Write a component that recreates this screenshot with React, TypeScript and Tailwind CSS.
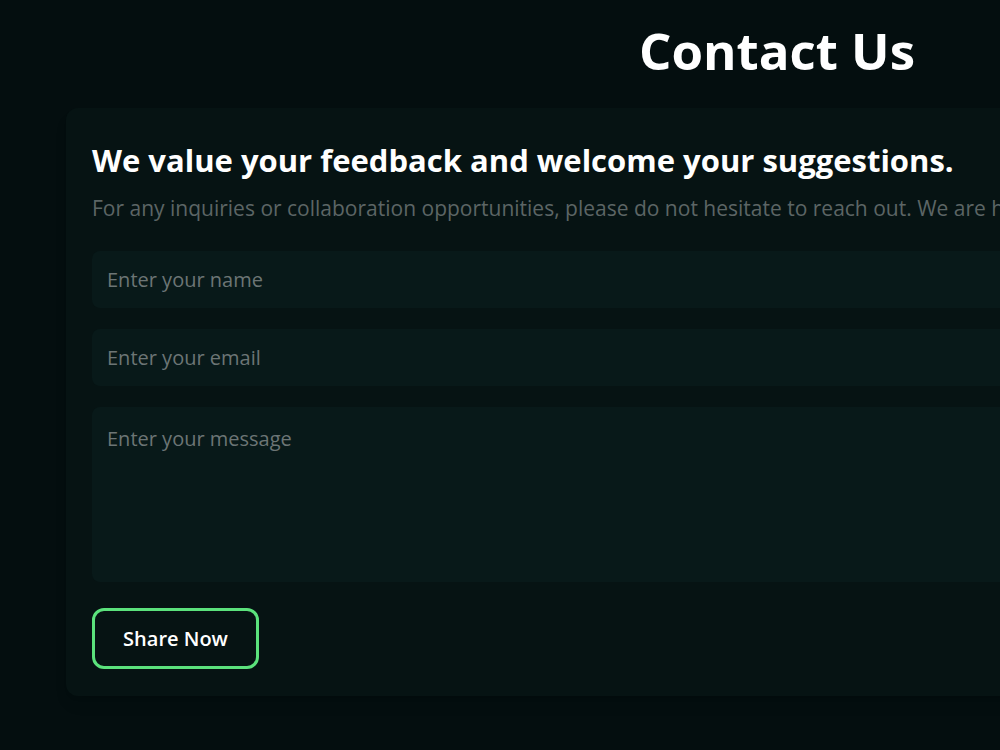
import React, { useState } from 'react';

export default function App() {
  const [name, setName] = useState('');
  const [email, setEmail] = useState('');
  const [message, setMessage] = useState('');

  const handleSubmit = (e: React.FormEvent) => {
    e.preventDefault();
  };

  return (
    <div
      className="h-screen w-full overflow-hidden bg-[#040e0f]"
      style={{ fontFamily: '"Segoe UI", "Open Sans", "Noto Sans", sans-serif' }}
    >
      <div className="w-[1554px] pt-[14px]">
        <h1 className="text-center text-[51px] font-bold leading-[72px] text-white">Contact Us</h1>
        <div className="mx-[66px] mt-[22px] rounded-xl bg-[#061313] px-[26px] pb-[27px] pt-[34px] shadow-lg">
          <h2 className="text-[31px] font-bold leading-[36px] text-white">
            We value your feedback and welcome your suggestions.
          </h2>
          <p className="mt-[16px] whitespace-nowrap text-[21px] leading-[28px] text-[#5c6565]">
            For any inquiries or collaboration opportunities, please do not hesitate to reach out. We are here to help
            and will get back to you as soon as possible.
          </p>
          <form className="mt-[29px] flex flex-col gap-[21px]" onSubmit={handleSubmit}>
            <input
              className="h-[57px] w-full rounded-lg bg-[#081919] px-[15px] text-xl text-white placeholder-[#6c7575] outline-none"
              placeholder="Enter your name"
              type="text"
              value={name}
              onChange={(e) => setName(e.target.value)}
            />
            <input
              className="h-[57px] w-full rounded-lg bg-[#081919] px-[15px] text-xl text-white placeholder-[#6c7575] outline-none"
              placeholder="Enter your email"
              type="email"
              value={email}
              onChange={(e) => setEmail(e.target.value)}
            />
            <textarea
              className="h-[175px] w-full resize-none rounded-lg bg-[#081919] px-[15px] pb-[16px] pt-[18px] text-xl text-white placeholder-[#6c7575] outline-none"
              placeholder="Enter your message"
              value={message}
              onChange={(e) => setMessage(e.target.value)}
            />
            <div className="pt-[5px]">
              <button
                type="submit"
                className="h-[61px] w-[167px] rounded-xl border-[3px] border-[#5be27c] text-xl font-semibold text-white"
              >
                Share Now
              </button>
            </div>
          </form>
        </div>
      </div>
    </div>
  );
}
